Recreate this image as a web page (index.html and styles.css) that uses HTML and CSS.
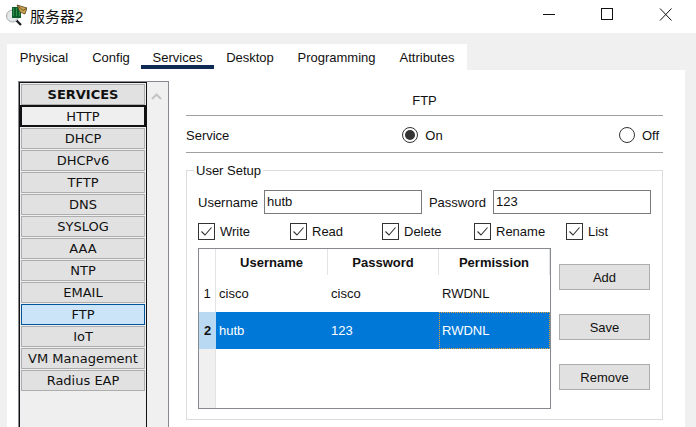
FILE: index.html
```html
<!DOCTYPE html>
<html>

<head>
    <meta charset="UTF-8" />
    <meta name="viewport" content="width=device-width" />
    <title>服务器2</title>
    <link rel="stylesheet" href="styles.css">
</head>

<body>
    <header class="titlebar">
        <svg class="app-icon" width="22" height="22" viewBox="0 0 22 22">
            <path d="M10 15 L16 21" stroke="#222" stroke-width="2.4" />
            <circle cx="7.5" cy="12" r="6" fill="#e4e7e7" stroke="#a5a9a9" />
            <rect x="7" y="3" width="9" height="11" fill="#0d5d2a" />
            <path d="M8 5h1M11 5h1M14 5h1M8 7h1M11 7h1M14 7h1M8 9h1M11 9h1M14 9h1M8 11h1M11 11h1M14 11h1" stroke="#4cc56c" />
            <path d="M12 1 L22 4 L20 10 L15 8 Z" fill="#c9a44e" stroke="#5a4520" stroke-width="0.8" />
            <path d="M12 1 L18 6.5 L22 4" fill="none" stroke="#5a4520" stroke-width="0.8" />
        </svg>
        <span class="title">服务器2</span>
        <div class="win-buttons">
            <span class="win-min"></span>
            <span class="win-max"></span>
            <svg class="win-close" width="13" height="13" viewBox="0 0 13 13">
                <path d="M1 0.5 L12.5 12.5 M12.5 0.5 L1 12.5" stroke="#111" stroke-width="1" />
            </svg>
        </div>
    </header>

    <main class="window">
        <nav class="tabs">
            <span class="tab">Physical</span>
            <span class="tab">Config</span>
            <span class="tab active">Services</span>
            <span class="tab">Desktop</span>
            <span class="tab">Programming</span>
            <span class="tab">Attributes</span>
        </nav>

        <div class="panel">
            <aside class="sidebar">
                <div class="service-list">
                    <div class="service-head">SERVICES</div>
                    <div class="service focused">HTTP</div>
                    <div class="service">DHCP</div>
                    <div class="service">DHCPv6</div>
                    <div class="service">TFTP</div>
                    <div class="service">DNS</div>
                    <div class="service">SYSLOG</div>
                    <div class="service">AAA</div>
                    <div class="service">NTP</div>
                    <div class="service">EMAIL</div>
                    <div class="service selected">FTP</div>
                    <div class="service">IoT</div>
                    <div class="service">VM Management</div>
                    <div class="service">Radius EAP</div>
                </div>
                <div class="scrollbar">
                    <svg width="11" height="7" viewBox="0 0 11 7">
                        <path d="M1 6 L5.5 1.5 L10 6" fill="none" stroke="#c4c4c4" stroke-width="2" />
                    </svg>
                </div>
            </aside>

            <section class="content">
                <h2 class="heading">FTP</h2>

                <div class="service-row">
                    <span class="service-label">Service</span>
                    <label class="radio-on"><span class="radio checked"></span>On</label>
                    <label class="radio-off"><span class="radio"></span>Off</label>
                </div>

                <div class="user-setup">
                    <span class="legend">User Setup</span>

                    <div class="credentials">
                        <span>Username</span>
                        <span class="field user-field">hutb</span>
                        <span class="pass-label">Password</span>
                        <span class="field">123</span>
                    </div>

                    <div class="perms">
                        <label class="perm"><span class="check"><svg width="15" height="15" viewBox="0 0 15 15"><path d="M2.5 7.5 L6 11 L12.5 3.5" fill="none" stroke="#333" stroke-width="1.1" /></svg></span>Write</label>
                        <label class="perm"><span class="check"><svg width="15" height="15" viewBox="0 0 15 15"><path d="M2.5 7.5 L6 11 L12.5 3.5" fill="none" stroke="#333" stroke-width="1.1" /></svg></span>Read</label>
                        <label class="perm"><span class="check"><svg width="15" height="15" viewBox="0 0 15 15"><path d="M2.5 7.5 L6 11 L12.5 3.5" fill="none" stroke="#333" stroke-width="1.1" /></svg></span>Delete</label>
                        <label class="perm"><span class="check"><svg width="15" height="15" viewBox="0 0 15 15"><path d="M2.5 7.5 L6 11 L12.5 3.5" fill="none" stroke="#333" stroke-width="1.1" /></svg></span>Rename</label>
                        <label class="perm"><span class="check"><svg width="15" height="15" viewBox="0 0 15 15"><path d="M2.5 7.5 L6 11 L12.5 3.5" fill="none" stroke="#333" stroke-width="1.1" /></svg></span>List</label>
                    </div>

                    <div class="users">
                        <div class="users-table">
                            <div class="row head">
                                <div class="row-num"></div>
                                <div class="cell">Username</div>
                                <div class="cell">Password</div>
                                <div class="cell">Permission</div>
                            </div>
                            <div class="row">
                                <div class="row-num">1</div>
                                <div class="cell">cisco</div>
                                <div class="cell">cisco</div>
                                <div class="cell">RWDNL</div>
                            </div>
                            <div class="row picked">
                                <div class="row-num">2</div>
                                <div class="cell">hutb</div>
                                <div class="cell">123</div>
                                <div class="cell current">RWDNL</div>
                            </div>
                            <div class="row empty">
                                <div class="row-num"></div>
                            </div>
                        </div>

                        <div class="actions">
                            <button>Add</button>
                            <button>Save</button>
                            <button>Remove</button>
                        </div>
                    </div>
                </div>
            </section>
        </div>
    </main>
</body>

</html>
```

FILE: styles.css
```css
* {
    box-sizing: border-box;
}

html,
body {
    margin: 0;
    height: 427px;
    overflow: hidden;
}

body {
    font-family: "Liberation Sans", Arial, sans-serif;
    font-size: 13px;
    color: #111;
    background: #f0f0f0;
}

.titlebar {
    display: flex;
    align-items: center;
    height: 33px;
    background: white;
    padding-left: 5px;
}

.app-icon {
    margin-top: -3px;
}

.title {
    margin-left: 3px;
    margin-top: -3px;
    font-family: "Liberation Sans", "Noto Sans CJK SC", sans-serif;
    font-size: 15px;
}

.win-buttons {
    display: flex;
    align-items: center;
    margin-left: auto;
    margin-top: -5px;
    padding-right: 24px;
}

.win-min {
    width: 12px;
    height: 1px;
    background: #111;
}

.win-max {
    width: 12px;
    height: 12px;
    margin-left: 46px;
    border: 1px solid #111;
}

.win-close {
    margin-left: 46px;
}

.window {
    margin: 11px 11px 0 7px;
}

.tabs {
    display: grid;
    grid-template-columns: 74px 60px 73px 72px 101px 80px;
    width: 460px;
    height: 26px;
    background: white;
}

.tab {
    padding-top: 6px;
    border-bottom: 4px solid transparent;
    margin-bottom: 1px;
    line-height: 15px;
    text-align: center;
}

.tab.active {
    border-bottom-color: #0e2a52;
}

.panel {
    display: flex;
    height: 360px;
    padding: 11px 22px 0 11px;
    background: white;
}

.sidebar {
    display: flex;
    flex: none;
    width: 151px;
    height: 360px;
    border: 1px solid #868a8f;
    border-bottom: none;
    background: #f0f0f0;
}

.service-list {
    width: 128px;
    padding: 1px 1px 0;
    border: 1px solid #111;
    border-bottom: none;
    background: #efefef;
    font-family: "DejaVu Sans", sans-serif;
    font-size: 13px;
}

.service-head,
.service {
    display: flex;
    align-items: center;
    justify-content: center;
    height: 21px;
    margin-bottom: 1px;
    background: #e1e1e1;
    border: 1px solid #adadad;
    white-space: nowrap;
}

.service-head {
    font-weight: bold;
    margin-bottom: 0;
}

.service.focused {
    height: 22px;
    margin: 0 -1px 1px;
    background: #efefef;
    border: 2px solid #111;
}

.service.selected {
    background: #cce4f7;
    border-color: #005499;
}

.scrollbar {
    flex: 1;
    padding: 6px 0 0 4px;
}

.content {
    flex: none;
    width: 477px;
    margin-left: 17px;
}

.heading {
    margin: 0;
    height: 35px;
    padding-top: 12px;
    border-bottom: 1px solid #a0a0a0;
    font-size: 13px;
    font-weight: normal;
    line-height: 15px;
    text-align: center;
}

.service-row {
    display: flex;
    align-items: center;
    height: 37px;
    padding-top: 2px;
    border-bottom: 1px solid #a0a0a0;
}

.radio-on,
.radio-off {
    display: flex;
    align-items: center;
    gap: 7px;
}

.radio-on {
    margin-left: 173px;
}

.radio-off {
    margin-left: auto;
    padding-right: 4px;
}

.radio {
    display: flex;
    align-items: center;
    justify-content: center;
    width: 16px;
    height: 16px;
    border: 1px solid #333;
    border-radius: 50%;
}

.radio.checked::after {
    content: "";
    width: 10px;
    height: 10px;
    border-radius: 50%;
    background: #333;
}

.user-setup {
    position: relative;
    height: 250px;
    margin-top: 17px;
    padding: 19px 11px 0;
    border: 1px solid #dcdcdc;
}

.legend {
    position: absolute;
    top: -8px;
    left: 7px;
    padding: 0 2px;
    background: white;
    line-height: 15px;
}

.credentials {
    display: flex;
    align-items: center;
    height: 24px;
}

.field {
    width: 158px;
    height: 24px;
    margin-left: 7px;
    padding-left: 2px;
    border: 1px solid #7a7a7a;
    line-height: 22px;
}

.user-field {
    margin-left: 6px;
}

.pass-label {
    margin-left: 7px;
}

.perms {
    display: flex;
    margin-top: 9px;
}

.perm {
    display: flex;
    align-items: center;
    flex: none;
    gap: 5px;
    width: 92px;
}

.check {
    display: flex;
    align-items: center;
    justify-content: center;
    width: 17px;
    height: 17px;
    border: 1px solid #333;
}

.users {
    display: flex;
    margin-top: 8px;
}

.users-table {
    display: flex;
    flex-direction: column;
    flex: none;
    width: 353px;
    height: 161px;
    border: 1px solid #868a8f;
}

.row {
    display: flex;
    align-items: center;
    height: 37px;
}

.row.head {
    height: 26px;
    font-weight: bold;
}

.row-num {
    align-self: stretch;
    display: flex;
    align-items: center;
    justify-content: center;
    flex: none;
    width: 17px;
    border-right: 1px solid #e3e3e3;
}

.cell {
    align-self: stretch;
    display: flex;
    align-items: center;
    width: 111px;
    padding-left: 3px;
}

.row-num + .cell {
    width: 112px;
}

.cell:last-child {
    flex: 1;
}

.head .cell {
    justify-content: center;
    padding-left: 0;
    border-right: 1px solid #e3e3e3;
}

.picked {
    background: #0078d7;
    color: white;
}

.picked .row-num {
    background: #b9d9f2;
    color: #111;
    font-weight: bold;
    border-right: none;
}

.picked .current {
    border: 1px dotted #e8a33d;
    padding-left: 2px;
}

.row.empty {
    flex: 1;
}

.row.empty .row-num {
    background: #f0f0f0;
}

.actions {
    display: flex;
    flex-direction: column;
    gap: 24px;
    margin: 16px 0 0 8px;
}

.actions button {
    width: 91px;
    height: 26px;
    padding: 0;
    background: #e1e1e1;
    border: 1px solid #adadad;
    font: inherit;
    color: #111;
}
```
